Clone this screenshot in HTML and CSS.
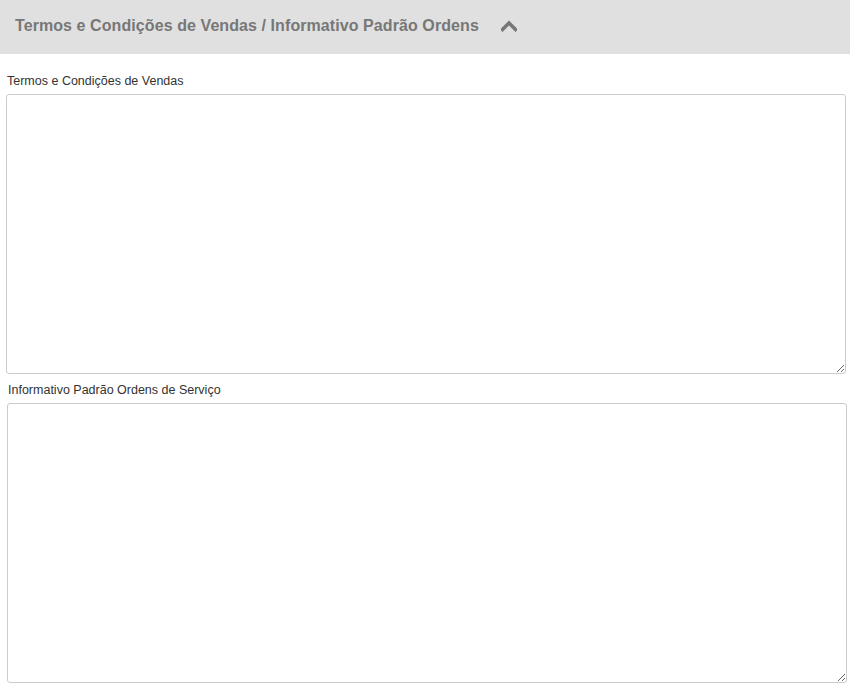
FILE: index.html
```html
<!DOCTYPE html>
<html lang="pt">
<head>
<meta charset="utf-8">
<title>Termos e Condições</title>
<link rel="stylesheet" href="styles.css">
</head>
<body>
<div class="panel-header">
  <span class="panel-title">Termos e Condições de Vendas / Informativo Padrão Ordens</span>
  <svg class="chevron" width="16" height="12" viewBox="0 0 16 12" aria-hidden="true">
    <path d="M1.5 9.5 L8 3 L14.5 9.5" fill="none" stroke="#777" stroke-width="3.6" stroke-linecap="square" stroke-linejoin="miter"/>
  </svg>
</div>
<div class="panel-body">
  <div class="field field-one">
    <label class="field-label">Termos e Condições de Vendas</label>
    <textarea class="field-input"></textarea>
  </div>
  <div class="field field-two">
    <label class="field-label">Informativo Padrão Ordens de Serviço</label>
    <textarea class="field-input"></textarea>
  </div>
</div>
</body>
</html>
```
FILE: styles.css
```css
html, body {
  margin: 0;
  padding: 0;
  background: #ffffff;
  font-family: "Liberation Sans", Arial, sans-serif;
}

.panel-header {
  height: 54px;
  box-sizing: border-box;
  background: #e0e0e0;
  padding: 17px 0 0 15px;
  display: flex;
  align-items: flex-start;
}

.panel-title {
  font-size: 16px;
  line-height: 18px;
  font-weight: bold;
  color: #777777;
  letter-spacing: 0.08px;
}

.chevron {
  margin-left: 22px;
  margin-top: 3px;
}

.panel-body {
  padding-top: 18px;
}

.field {
  display: flex;
  flex-direction: column;
  width: 840px;
}

.field-one {
  margin-left: 6px;
}

.field-two {
  margin-left: 7px;
  margin-top: 7px;
}

.field-label {
  font-size: 12.5px;
  line-height: 14px;
  color: #333333;
  padding: 2px 0 0 1px;
  margin-bottom: 6px;
}

.field-input {
  display: block;
  width: 840px;
  height: 280px;
  box-sizing: border-box;
  margin: 0;
  border: 1px solid #cccccc;
  border-radius: 3px;
  background: #ffffff;
  resize: vertical;
  font-family: "Liberation Sans", Arial, sans-serif;
  font-size: 12px;
}
```
